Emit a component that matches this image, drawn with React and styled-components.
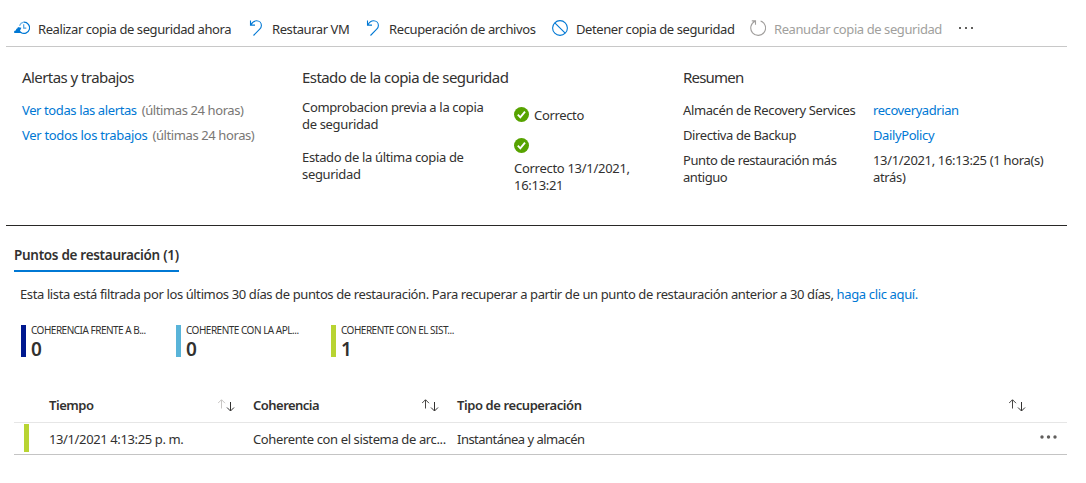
import React from "react";
import styled, { createGlobalStyle } from "styled-components";

const Global = createGlobalStyle`
  * { box-sizing: border-box; }
  body {
    margin: 0;
    background: #fff;
    color: #323130;
    font: 13px/17px "Noto Sans", "Open Sans", sans-serif;
    overflow: hidden;
  }
`;

const Page = styled.main`
  width: 1067px;
  height: 483px;
  padding-left: 6px;
  white-space: nowrap;
`;

const Toolbar = styled.nav`
  display: flex;
  height: 47px;
  padding: 20px 0 0 8px;
  border-bottom: 1px solid #c8c8c8;
`;

const Command = styled.button`
  display: flex;
  flex: none;
  width: ${(p) => p.$width}px;
  gap: ${(p) => p.$gap ?? 8}px;
  padding: 0;
  border: 0;
  background: none;
  font: inherit;
  text-align: left;
  letter-spacing: ${(p) => p.$track ?? -0.42}px;
  color: ${(p) => (p.$disabled ? "#a19f9d" : "#323130")};
  svg { flex: none; }
  span { padding-top: 1px; }
`;

const Summary = styled.section`
  display: flex;
  height: 179px;
  padding: 20px 0 0 16px;
  border-bottom: 1px solid #292827;
`;

const Panel = styled.div`
  flex: none;
  width: ${(p) => p.$width}px;
`;

const Heading = styled.h2`
  margin: 0 0 ${(p) => p.$below}px;
  font-size: 15px;
  line-height: 20px;
  font-weight: 400;
  letter-spacing: ${(p) => p.$track ?? -0.56}px;
`;

const Line = styled.div`
  display: flex;
  margin-bottom: 8px;
  gap: ${(p) => p.$gap ?? 0}px;
`;

const Link = styled.a`
  color: #0078d4;
  letter-spacing: ${(p) => p.$track ?? -0.39}px;
`;

const Text = styled.span`
  letter-spacing: ${(p) => p.$track ?? -0.34}px;
  color: ${(p) => (p.$muted ? "#797775" : "inherit")};
`;

const Label = styled.div`
  flex: none;
  width: ${(p) => p.$width}px;
  letter-spacing: ${(p) => p.$track ?? -0.34}px;
`;

const StateGrid = styled.div`
  display: flex;
`;

const StateColumn = styled.div`
  flex: none;
  width: ${(p) => p.$width}px;
  display: flex;
  flex-direction: column;
  gap: ${(p) => p.$gap}px;
  svg { display: block; flex: none; }
`;

const StateValue = styled.div`
  display: flex;
  gap: 5px;
  padding-top: 8px;
`;

const StateDetail = styled.div`
  padding-top: 7px;
`;

const Tab = styled.div`
  width: 165px;
  height: 26px;
  margin: 20px 0 0 8px;
  padding-top: 1px;
  font-size: 13.5px;
  font-weight: 600;
  border-bottom: 2px solid #0078d4;
  letter-spacing: -0.3px;
`;

const Notice = styled.p`
  margin: 14px 0 0 14px;
`;

const Stats = styled.div`
  display: flex;
  margin: 22px 0 0 15px;
`;

const Stat = styled.div`
  width: 155px;
  height: 32px;
  padding-left: 5px;
  border-left: 5px solid ${(p) => p.$color};
`;

const StatLabel = styled.div`
  height: 12px;
  font-size: 10px;
  line-height: 11px;
  letter-spacing: -0.5px;
`;

const StatValue = styled.div`
  font-size: 19px;
  line-height: 24px;
  font-weight: 600;
`;

const Table = styled.div`
  margin: 31px 0 0 8px;
`;

const Row = styled.div`
  display: grid;
  grid-template-columns: 35px 204px 204px 569px 1fr;
  align-items: center;
  height: ${(p) => (p.$head ? 35 : 32)}px;
  border-bottom: 1px solid ${(p) => (p.$head ? "#e6e6e6" : "#c4c4c4")};
  font-weight: ${(p) => (p.$head ? 600 : 400)};
`;

const Cell = styled.div`
  display: flex;
  align-items: center;
  padding-top: ${(p) => p.$drop ?? 0}px;
  letter-spacing: ${(p) => p.$track ?? -0.38}px;
`;

const SortSlot = styled.span`
  display: flex;
  margin-left: auto;
  padding: 1px ${(p) => p.$right ?? 18}px 0 0;
`;

const Marker = styled.div`
  width: 5px;
  height: 28px;
  margin: 0 0 1px 10px;
  background: #b8d432;
`;

const More = styled.div`
  padding: 0 0 3px 14px;
  svg { display: block; }
`;

const BackupIcon = () => (
  <svg width="16" height="16" viewBox="0 0 16 16" fill="none">
    <path d="M9.700 2.200a5.600 5.600 0 1 1-2.900 10.200" stroke="#0078d4" strokeWidth="1.200" />
    <path d="M5.500 5.800c.7-1.800 2.200-3.200 4.200-3.600" stroke="#6bb2e8" strokeWidth="1.200" />
    <path d="M9.700 4.200v4h2.600" stroke="#4ba0e1" strokeWidth="1.200" />
    <path d="M0 12.200c0-1.100.9-1.800 1.900-1.700.1-1.400 1-2.300 2.200-2.400L3.400 7l4 .8-1.500 3.200c.9.2 1.600.9 1.600 1.900H1.200C.5 12.900 0 12.700 0 12.200Z" fill="#0078d4" />
  </svg>
);

const UndoIcon = () => (
  <svg width="14" height="17" viewBox="0 0 14 17" fill="none" stroke="#0078d4" strokeWidth="1.1">
    <path d="M1.500.5v4.600h4.500M1.700 4.900C3.400 2.200 5.300.8 7.500.8c2.900 0 4.900 2.100 4.900 4.700 0 1.500-.6 2.600-1.700 3.700L4.500 15.500" />
  </svg>
);

const StopIcon = () => (
  <svg width="16" height="16" viewBox="0 0 16 16" fill="none" stroke="#0078d4" strokeWidth="1.1">
    <circle cx="8" cy="8" r="7.400" />
    <path d="m2.800 2.800 10.400 10.400" />
  </svg>
);

const ResumeIcon = () => (
  <svg width="16" height="16" viewBox="0 0 16 16" fill="none" stroke="#a19f9d" strokeWidth="1.100">
    <path d="M10.600 1a7.400 7.400 0 1 1-5.600.3M1.800.9h3.700v3.800" />
  </svg>
);

const CheckIcon = () => (
  <svg width="15" height="15" viewBox="0 0 15 15">
    <circle cx="7.500" cy="7.500" r="7.500" fill="#57a300" />
    <path d="m3.800 7.700 2.500 2.600 4.700-5.700" fill="none" stroke="#fff" strokeWidth="1.900" />
  </svg>
);

const SortIcon = ({ first = "#484644" }) => (
  <svg width="17" height="13" viewBox="0 0 17 13" fill="none" strokeWidth="1">
    <path d="M3.500 9.500V1M0 4.200l3.500-3.500L7 4.200" stroke={first} />
    <path d="M12.500 3v8.800M9 8.500l3.500 3.500L16 8.500" stroke="#323130" />
  </svg>
);

const Dots = () => (
  <svg width="17" height="4" viewBox="0 0 17 4" fill="#605e5c">
    <circle cx="2" cy="2" r="1.700" />
    <circle cx="8.500" cy="2" r="1.700" />
    <circle cx="15" cy="2" r="1.700" />
  </svg>
);

const stats = [
  ["#00188f", "COHERENCIA FRENTE A B...", "0"],
  ["#59b4d9", "COHERENTE CON LA APL...", "0"],
  ["#b8d432", "COHERENTE CON EL SIST...", "1"],
];

export default function App() {
  return (
    <Page>
      <Global />
      <Toolbar>
        <Command $width={235}><BackupIcon /><span>Realizar copia de seguridad ahora</span></Command>
        <Command $width={117} $gap={9}><UndoIcon /><span>Restaurar VM</span></Command>
        <Command $width={186} $gap={9} $track={-0.38}><UndoIcon /><span>Recuperación de archivos</span></Command>
        <Command $width={198}><StopIcon /><span>Detener copia de seguridad</span></Command>
        <Command $width={208} $disabled><ResumeIcon /><span>Reanudar copia de seguridad</span></Command>
        <Command $width={17} aria-label="Más"><svg width="17" height="16" fill="#605e5c"><path d="M1 7h2v2H1zM7 7h2v2H7zM13 7h2v2h-2z" /></svg></Command>
      </Toolbar>
      <Summary>
        <Panel $width={280}>
          <Heading $below={15}>Alertas y trabajos</Heading>
          <Line $gap={5}><Link>Ver todas las alertas</Link><Text $muted $track={-0.4}>(últimas 24 horas)</Text></Line>
          <Line $gap={5}><Link $track={-0.31}>Ver todos los trabajos</Link><Text $muted $track={-0.4}>(últimas 24 horas)</Text></Line>
        </Panel>
        <Panel $width={381}>
          <Heading $below={12}>Estado de la copia de seguridad</Heading>
          <StateGrid>
            <StateColumn $width={212} $gap={16}>
              <Label>Comprobacion previa a la copia<br />de seguridad</Label>
              <Label>Estado de la última copia de<br />seguridad</Label>
            </StateColumn>
            <StateColumn $gap={14}>
              <StateValue><CheckIcon /><Text>Correcto</Text></StateValue>
              <div><CheckIcon /><StateDetail><Text $track={-0.29}>Correcto 13/1/2021,<br />16:13:21</Text></StateDetail></div>
            </StateColumn>
          </StateGrid>
        </Panel>
        <Panel $width={384}>
          <Heading $below={15} $track={-0.8}>Resumen</Heading>
          <Line><Label $width={190} $track={-0.38}>Almacén de Recovery Services</Label><Link $track={-0.42}>recoveryadrian</Link></Line>
          <Line><Label $width={190} $track={-0.39}>Directiva de Backup</Label><Link>DailyPolicy</Link></Line>
          <Line><Label $width={190} $track={-0.43}>Punto de restauración más<br />antiguo</Label><Text>13/1/2021, 16:13:25 (1 hora(s)<br />atrás)</Text></Line>
        </Panel>
      </Summary>
      <Tab>Puntos de restauración (1)</Tab>
      <Notice><Text $track={-0.385}>Esta lista está filtrada por los últimos 30 días de puntos de restauración. Para recuperar a partir de un punto de restauración anterior a 30 días, </Text><Link $track={-0.35}>haga clic aquí.</Link></Notice>
      <Stats>
        {stats.map(([color, label, value]) => (
          <Stat key={label} $color={color}><StatLabel>{label}</StatLabel><StatValue>{value}</StatValue></Stat>
        ))}
      </Stats>
      <Table>
        <Row $head>
          <span />
          <Cell $track={-0.45}>Tiempo<SortSlot><SortIcon first="#c8c6c4" /></SortSlot></Cell>
          <Cell $track={-0.52}>Coherencia<SortSlot><SortIcon /></SortSlot></Cell>
          <Cell $track={-0.41}>Tipo de recuperación<SortSlot $right={-1}><SortIcon /></SortSlot></Cell>
        </Row>
        <Row>
          <Marker />
          <Cell $drop={2}>13/1/2021 4:13:25 p. m.</Cell>
          <Cell $drop={2} $track={-0.37}>Coherente con el sistema de arc...</Cell>
          <Cell $drop={2} $track={-0.52}>Instantánea y almacén</Cell>
          <More><Dots /></More>
        </Row>
      </Table>
    </Page>
  );
}
